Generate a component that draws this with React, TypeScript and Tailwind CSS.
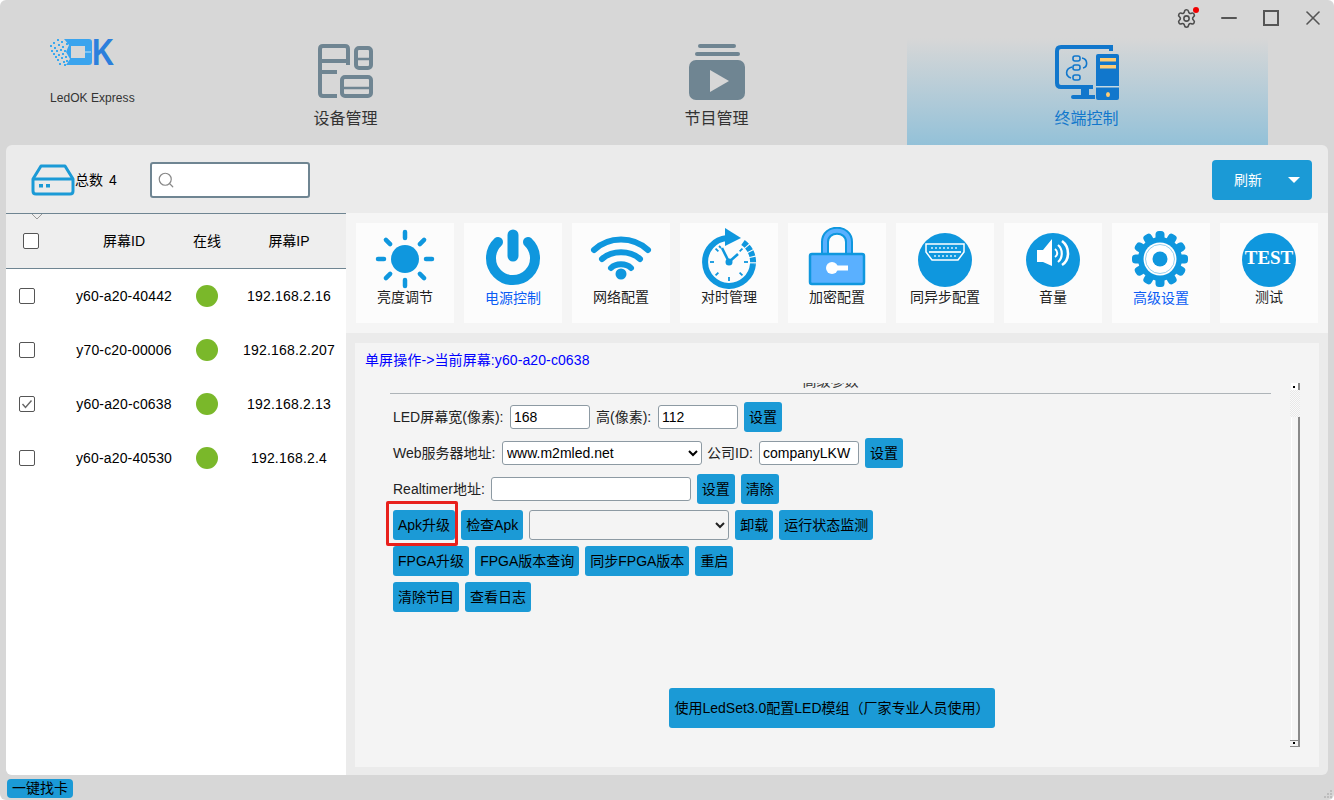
import { Minus, Search, Settings, X } from "lucide-react";
import type { ReactNode } from "react";

const BLUE = "#0f97de";
const SLATE = "#6f8592";

function SunIcon() {
  return (
    <svg width="64" height="64" viewBox="0 0 64 64" className="mt-[4px]">
      <circle cx="32" cy="32" r="14" fill={BLUE} />
      {[0, 45, 90, 135, 180, 225, 270, 315].map((a) => (
        <line key={a} x1="32" y1="11" x2="32" y2="5" stroke={BLUE} strokeWidth="4.5" strokeLinecap="round" transform={`rotate(${a} 32 32)`} />
      ))}
    </svg>
  );
}

function PowerIcon() {
  return (
    <svg width="64" height="64" viewBox="0 0 64 64" className="mt-[4px]">
      <path d="M17 15 A22 22 0 1 0 47 15" fill="none" stroke={BLUE} strokeWidth="10" strokeLinecap="round" />
      <line x1="32" y1="8" x2="32" y2="29" stroke={BLUE} strokeWidth="11" strokeLinecap="round" />
    </svg>
  );
}

function WifiIcon() {
  return (
    <svg width="64" height="64" viewBox="0 0 64 64" className="mt-[4px]">
      <g fill="none" stroke={BLUE} strokeWidth="6" strokeLinecap="round">
        <path d="M5 23 C20 9 44 9 59 23" />
        <path d="M13 32 C23 23 41 23 51 32" />
        <path d="M22 41 C27 36 37 36 42 41" />
      </g>
      <circle cx="32" cy="47" r="5.5" fill={BLUE} />
    </svg>
  );
}

function ClockIcon() {
  return (
    <svg width="64" height="64" viewBox="0 0 64 64" className="mt-[4px]">
      <path d="M30 11 A24 24 0 1 0 56 37" fill="none" stroke={BLUE} strokeWidth="6" />
      <path d="M28 1 L44 11 L28 19 Z" fill={BLUE} />
      <path d="M46 15.5 A24 24 0 0 1 56 37" fill="none" stroke={BLUE} strokeWidth="6" strokeDasharray="5 1" />
      {[45, 90, 135, 180, 225, 270, 315].map((a) => (
        <line key={a} x1="32" y1="16" x2="32" y2="20" stroke={BLUE} strokeWidth="1.8" transform={`rotate(${a} 32 35)`} />
      ))}
      <line x1="22" y1="19" x2="24" y2="21" stroke={BLUE} strokeWidth="1.8" />
      <path d="M25 21 L32 35 L41 27" fill="none" stroke={BLUE} strokeWidth="2.6" />
      <circle cx="32" cy="35" r="3.5" fill={BLUE} />
    </svg>
  );
}

function LockIcon() {
  return (
    <svg width="64" height="64" viewBox="0 0 64 64" className="mt-[4px]">
      <path d="M20 27 V15 C20 0 44 0 44 15 V27" fill="none" stroke={BLUE} strokeWidth="8" />
      <path d="M20 27 V15 C20 0 44 0 44 15 V27" fill="none" stroke="#5ab0ff" strokeWidth="4" />
      <rect x="5" y="27" width="54" height="30" rx="2" fill="#5ab0ff" stroke={BLUE} strokeWidth="2.5" />
      <circle cx="27" cy="41" r="6" fill="#fff" />
      <rect x="31" y="38.5" width="12" height="5" fill="#fff" />
    </svg>
  );
}

function HdmiIcon() {
  return (
    <svg width="64" height="64" viewBox="0 0 64 64" className="mt-[4px]">
      <circle cx="32" cy="33" r="27" fill={BLUE} />
      <path d="M13 17 H51 V25 L45 33 H19 L13 25 Z" fill="none" stroke="#fff" strokeWidth="1.5" />
      <line x1="16" y1="25" x2="48" y2="25" stroke="#d5eefb" strokeWidth="2" />
      <line x1="18" y1="21" x2="46" y2="21" stroke="#d5eefb" strokeWidth="1.5" strokeDasharray="2 2" />
      <line x1="21" y1="29" x2="43" y2="29" stroke="#d5eefb" strokeWidth="1.5" strokeDasharray="2 2" />
    </svg>
  );
}

function VolumeIcon() {
  return (
    <svg width="64" height="64" viewBox="0 0 64 64" className="mt-[4px]">
      <circle cx="32" cy="33" r="27" fill={BLUE} />
      <path d="M16 23 H22 L31 12 V39 L22 35 H16 Z" fill="#fff" />
      <g fill="none" stroke="#fff">
        <path d="M34 22 C37 24 37 28 34 30" strokeWidth="2" />
        <path d="M37 18 C42 22 42 31 37 35" strokeWidth="2.2" />
        <path d="M41 14 C49 20 49 33 41 38" strokeWidth="2.6" />
      </g>
    </svg>
  );
}

function GearIcon() {
  const teeth = [0, 30, 60, 90, 120, 150, 180, 210, 240, 270, 300, 330];
  return (
    <svg width="64" height="64" viewBox="0 0 64 64" className="mt-[4px]">
      <g transform="translate(-1 0)">
        {teeth.map((a) => (
          <rect key={a} x="27.5" y="4" width="9" height="12" rx="3.5" fill={BLUE} transform={`rotate(${a} 32 32)`} />
        ))}
        <circle cx="32" cy="32" r="22" fill={BLUE} />
        <circle cx="32" cy="32" r="16.5" fill="#fff" />
        <circle cx="32" cy="32" r="14.5" fill="none" stroke="#7cc4ea" strokeWidth="0.8" />
        <circle cx="32" cy="32" r="7.5" fill={BLUE} />
      </g>
    </svg>
  );
}

function TestIcon() {
  return (
    <svg width="64" height="64" viewBox="0 0 64 64" className="mt-[4px]">
      <circle cx="32" cy="33" r="27" fill={BLUE} />
      <text x="32" y="37" textAnchor="middle" fill="#fff" fontSize="19" fontWeight="700" fontFamily="Liberation Serif, serif">
        TEST
      </text>
    </svg>
  );
}

const TOOLS: { label: string; icon: ReactNode; active?: boolean }[] = [
  { label: "亮度调节", icon: <SunIcon /> },
  { label: "电源控制", icon: <PowerIcon />, active: true },
  { label: "网络配置", icon: <WifiIcon /> },
  { label: "对时管理", icon: <ClockIcon /> },
  { label: "加密配置", icon: <LockIcon /> },
  { label: "同异步配置", icon: <HdmiIcon /> },
  { label: "音量", icon: <VolumeIcon /> },
  { label: "高级设置", icon: <GearIcon />, active: true },
  { label: "测试", icon: <TestIcon /> },
];

const SCREENS = [
  { id: "y60-a20-40442", ip: "192.168.2.16" },
  { id: "y70-c20-00006", ip: "192.168.2.207" },
  { id: "y60-a20-c0638", ip: "192.168.2.13", checked: true },
  { id: "y60-a20-40530", ip: "192.168.2.4" },
];

function DeviceTabIcon() {
  return (
    <svg width="56" height="56" viewBox="0 0 56 56">
      <g fill="none" stroke={SLATE} strokeWidth="4">
        <path d="M19 52 H5 Q2 52 2 49 V5 Q2 2 5 2 H27 Q30 2 30 5 V21" />
        <path d="M2 17 H30" />
        <path d="M2 28 H19" />
        <rect x="38" y="4" width="15" height="20" rx="3" />
        <rect x="24" y="33" width="29" height="19" rx="3" />
      </g>
      <path d="M38 15 H53 M24 44 H53" stroke={SLATE} strokeWidth="2.5" />
    </svg>
  );
}

function ProgramTabIcon() {
  return (
    <svg width="56" height="56" viewBox="0 0 56 56">
      <rect x="9" y="0" width="38" height="4" rx="2" fill={SLATE} />
      <rect x="6" y="8" width="45" height="4" rx="2" fill={SLATE} />
      <rect x="0" y="16" width="56" height="40" rx="7" fill={SLATE} />
      <path d="M21 26 L40 37 L21 48 Z" fill="#d7d7d7" />
    </svg>
  );
}

function TerminalTabIcon() {
  const c = "#1177cc";
  return (
    <svg width="64" height="56" viewBox="0 0 64 56">
      <path d="M38 42 H6 Q2 42 2 38 V6 Q2 2 6 2 H56 V6" fill="none" stroke={c} strokeWidth="4" />
      <path d="M26 42 H34 V50 H40 V54 H18 Q16 54 16 52 Q16 50 18 50 H26 Z" fill={c} />
      <rect x="41" y="9" width="23" height="46" rx="2" fill={c} />
      <rect x="41" y="41" width="23" height="1.5" fill="#c3d8e2" />
      <rect x="45" y="13" width="16" height="3.5" fill="#ffcc73" />
      <rect x="45" y="20" width="16" height="3.5" fill="#ffcc73" />
      <ellipse cx="53" cy="49.5" rx="2" ry="2.5" fill="#ffcc73" />
      <g fill="none" stroke={c} strokeWidth="1.6">
        <rect x="18" y="11" width="7" height="5" rx="2" />
        <rect x="18" y="20" width="7" height="5" rx="2" />
        <rect x="18" y="30" width="7" height="5" rx="2" />
        <path d="M27 13 C33 14 33 22 28 23" />
        <path d="M17 22 C10 24 10 31 16 33" />
      </g>
    </svg>
  );
}

const LOGO_DOTS = [
  [1, 7], [4, 4], [8, 1], [12, 3], [2, 12], [5, 9], [9, 6], [13, 8], [4, 15], [7, 12], [11, 11], [15, 12],
  [6, 18], [9, 16], [13, 15], [8, 21], [12, 19], [16, 18], [10, 25], [14, 23], [17, 5], [17, 22], [15, 26],
];

function Logo() {
  return (
    <svg width="76" height="43" viewBox="0 -8 76 43" className="-mt-[8px]">
      {LOGO_DOTS.map(([x, y]) => (
        <rect key={`${x}-${y}`} x={x} y={y} width="2" height="2" fill="#3aa9ef" />
      ))}
      <path fillRule="evenodd" d="M15 1 H40 Q43 1 43 4 V24 Q43 27 40 27 H17 L21 21 L17 14 L20 7 Z M22 8 V20 H36 V8 Z" fill="#3aa4ee" />
      <line x1="36" y1="14" x2="42" y2="14" stroke="#bfe3fa" strokeWidth="1" />
      <text x="43" y="27" fill="#2c7fdc" fontSize="36" fontWeight="700" fontFamily="Liberation Sans, sans-serif" textLength="22" lengthAdjust="spacingAndGlyphs">
        K
      </text>
    </svg>
  );
}

function Btn({ children, className = "" }: { children: ReactNode; className?: string }) {
  return (
    <button className={`relative h-[30px] rounded-[3px] bg-[#1b9ad6] px-[5px] text-[14px] text-black whitespace-nowrap ${className}`}>
      {children}
    </button>
  );
}

function TextInput({ value, className = "" }: { value?: string; className?: string }) {
  return (
    <input
      readOnly
      value={value ?? ""}
      className={`h-[24px] rounded-[3px] border border-[#8d9aa3] bg-white px-[3px] text-[14px] text-black outline-none ${className}`}
    />
  );
}

function Check({ checked, className = "" }: { checked?: boolean; className?: string }) {
  return (
    <div className={`flex h-[16px] w-[16px] items-center justify-center rounded-[2px] border-[1.5px] border-[#555] bg-white ${className}`}>
      {checked && (
        <svg width="12" height="12" viewBox="0 0 12 12">
          <path d="M1.5 6 L4.5 9.5 L10.5 2.5" fill="none" stroke="#666" strokeWidth="1.4" />
        </svg>
      )}
    </div>
  );
}

function Row({ children }: { children: ReactNode }) {
  return <div className="flex h-[30px] items-center gap-[6px]">{children}</div>;
}

export default function App() {
  return (
    <div className="flex h-[800px] w-[1334px] flex-col overflow-hidden rounded-md bg-[#d7d7d7] font-['Liberation_Sans','Noto_Sans_CJK_SC',sans-serif] text-[14px] text-black">
      {/* title bar */}
      <div className="flex h-[38px] items-start justify-end">
        <div className="relative mt-[8px] mr-[20px]">
          <Settings size={21} strokeWidth={1.8} color="#4d4d4d" />
          <span className="absolute right-[-2px] top-[-1px] h-[6px] w-[6px] rounded-full bg-[#f00000]" />
        </div>
        <Minus size={24} strokeWidth={2} color="#555" className="mt-[6px] mr-[22px]" />
        <div className="mt-[10px] mr-[22px] h-[16px] w-[16px] border-2 border-[#555]" />
        <X size={24} strokeWidth={1.6} color="#555" className="mt-[6px] mr-[9px]" />
      </div>

      {/* nav */}
      <div className="flex h-[107px]">
        <div className="w-[165px] pl-[49px]">
          <Logo />
          <div className="mt-[17px] pl-[1px] text-[12px] leading-[16px] tracking-[0.05px] text-[#333]">LedOK Express</div>
        </div>
        <div className="flex gap-[10px]">
          <div className="flex w-[361px] flex-col items-center pt-[6px]">
            <DeviceTabIcon />
            <div className="mt-[7px] text-[16px] leading-[24px] text-[#333]">设备管理</div>
          </div>
          <div className="flex w-[361px] flex-col items-center pt-[6px]">
            <ProgramTabIcon />
            <div className="mt-[7px] text-[16px] leading-[24px] text-[#333]">节目管理</div>
          </div>
          <div className="flex w-[361px] flex-col items-center bg-linear-to-b from-[#d7d7d7] to-[#93c1d8] pr-[2px] pt-[7px]">
            <TerminalTabIcon />
            <div className="mt-[6px] text-[16px] leading-[24px] text-[#1177cc]">终端控制</div>
          </div>
        </div>
      </div>

      {/* main panel */}
      <div className="mx-[6px] flex h-[630px] flex-col overflow-hidden rounded-md bg-[#ebebeb]">
        <div className="flex h-[68px] items-center pl-[25px] pr-[16px] pt-[2px]">
          <svg width="44" height="32" viewBox="0 0 44 32">
            <path d="M10 2 H34 L42 15 V27 Q42 30 39 30 H5 Q2 30 2 27 V15 Z" fill="none" stroke="#1b9ad6" strokeWidth="3" strokeLinejoin="round" />
            <path d="M2 15 H42" stroke="#1b9ad6" strokeWidth="3" />
            <rect x="8" y="20" width="4" height="3.5" fill="#1b9ad6" />
            <rect x="15" y="20" width="4" height="3.5" fill="#1b9ad6" />
          </svg>
          <span>总数</span>
          <span className="ml-[6px]">4</span>
          <div className="ml-[33px] flex h-[36px] w-[160px] items-center rounded-[3px] border-2 border-[#6f8592] bg-white pl-[5px]">
            <Search size={18} strokeWidth={1.6} color="#888" />
          </div>
          <div className="ml-auto flex h-[40px] w-[100px] items-center rounded-[4px] bg-[#1b9ad6] text-white">
            <span className="ml-[22px]">刷新</span>
            <span className="ml-auto mr-[12px] h-0 w-0 border-x-[6px] border-t-[6px] border-x-transparent border-t-white" />
          </div>
        </div>

        <div className="flex h-[562px]">
          {/* screen list */}
          <div className="relative w-[340px] border-t border-[#6f8592] bg-white">
            <svg width="12" height="6" viewBox="0 0 12 6" className="absolute left-[25px] top-[0px]">
              <path d="M1 0 L6 5 L11 0" fill="none" stroke="#999" />
            </svg>
            <div className="grid h-[55px] grid-cols-[64px_108px_58px_106px] items-center border-b border-[#6f8592] bg-[#eeeeee] text-center">
              <Check className="ml-[17px]" />
              <div>屏幕ID</div>
              <div>在线</div>
              <div>屏幕IP</div>
            </div>
            {SCREENS.map((s) => (
              <div key={s.id} className="grid h-[54px] grid-cols-[64px_108px_58px_106px] items-center text-center">
                <Check checked={s.checked} className="ml-[13px]" />
                <div className="tracking-[0.15px]">{s.id}</div>
                <div className="mx-auto h-[22px] w-[22px] rounded-full bg-[#7ab82a]" />
                <div className="whitespace-nowrap tracking-[0.2px]">{s.ip}</div>
              </div>
            ))}
          </div>

          <div className="flex flex-1 flex-col">
            {/* tools */}
            <div className="flex h-[120px] gap-[10px] bg-[#f5f5f5] pl-[10px] pt-[10px]">
              {TOOLS.map((t) => (
                <div key={t.label} className="flex h-[100px] w-[98px] flex-col items-center bg-[#fcfcfc]">
                  {t.icon}
                  <div className={t.active ? "-mt-[3px] leading-[20px] text-[#0a5cf5]" : "-mt-[4px] leading-[20px] text-[#222]"}>{t.label}</div>
                </div>
              ))}
            </div>

            {/* single screen panel */}
            <div className="ml-[9px] mt-[10px] h-[424px] w-[964px] bg-[#f4f4f4]">
              <div className="h-[40px] pl-[10px] pt-[7px] leading-[20px] tracking-[0.1px] text-[#0000ff]">单屏操作-&gt;当前屏幕:y60-a20-c0638</div>
              <div className="flex">
                <div className="ml-[35px] w-[881px]">
                  <div className="flex h-[5px] items-end justify-center overflow-hidden text-[#333]">
                    <span className="shrink-0 leading-[14px]">高级参数</span>
                  </div>
                  <div className="mt-[5px] h-px bg-[#aeb4b8]" />
                  <div className="mt-[8px] flex flex-col gap-[6px] pl-[3px] text-[#222]">
                    <Row>
                      <span className="w-[111px] whitespace-nowrap">LED屏幕宽(像素):</span>
                      <TextInput value="168" className="w-[80px]" />
                      <span className="w-[56px] whitespace-nowrap">高(像素):</span>
                      <TextInput value="112" className="w-[80px]" />
                      <Btn>设置</Btn>
                    </Row>
                    <Row>
                      <span className="w-[103px] whitespace-nowrap">Web服务器地址:</span>
                      <select className="h-[24px] w-[200px] rounded-[3px] border border-[#8d9aa3] bg-white text-[14px] text-black">
                        <option>www.m2mled.net</option>
                      </select>
                      <span className="-ml-[1px] w-[46px] whitespace-nowrap">公司ID:</span>
                      <TextInput value="companyLKW" className="w-[100px]" />
                      <Btn>设置</Btn>
                    </Row>
                    <Row>
                      <span>Realtimer地址:</span>
                      <TextInput className="w-[200px]" />
                      <Btn>设置</Btn>
                      <Btn>清除</Btn>
                    </Row>
                    <Row>
                      <Btn>
                        Apk升级
                        <span className="absolute -bottom-[6px] -left-[7px] -right-[3px] -top-[9px] rounded-[2px] border-[3px] border-[#e8201c]" />
                      </Btn>
                      <Btn>检查Apk</Btn>
                      <select className="h-[30px] w-[200px] rounded-[3px] border border-[#8d9aa3] bg-[#f4f4f4]" />
                      <Btn>卸载</Btn>
                      <Btn>运行状态监测</Btn>
                    </Row>
                    <Row>
                      <Btn>FPGA升级</Btn>
                      <Btn>FPGA版本查询</Btn>
                      <Btn>同步FPGA版本</Btn>
                      <Btn>重启</Btn>
                    </Row>
                    <Row>
                      <Btn>清除节目</Btn>
                      <Btn>查看日志</Btn>
                    </Row>
                  </div>
                  <button className="ml-[279px] mt-[76px] block h-[40px] w-[326px] rounded-[3px] bg-[#1b9ad6] text-[14px] text-black">
                    使用LedSet3.0配置LED模组（厂家专业人员使用）
                  </button>
                </div>

                {/* scrollbar */}
                <div className="ml-[19px] flex h-[364px] w-[10px] flex-col">
                  <div className="relative ml-[1px] h-[7px] border-r-2 border-[#8a8a8a] bg-white">
                    <span className="absolute left-[2px] top-[3px] h-[2px] w-[2px] bg-black" />
                  </div>
                  <div className="h-[27px] bg-[repeating-conic-gradient(#e8e8e8_0_25%,#fafafa_0_50%)] bg-size-[2px_2px]" />
                  <div className="ml-[1px] flex-1 border-l border-r-2 border-l-white border-r-[#8a8a8a] bg-[#f6f6f6]" />
                  <div className="relative h-[7px] border-y border-r-2 border-[#8a8a8a] bg-[#f4f4f4]">
                    <span className="absolute left-[3px] top-[1px] h-[2px] w-[2px] bg-black" />
                  </div>
                </div>
              </div>
            </div>
          </div>
        </div>
      </div>

      {/* footer */}
      <div className="relative flex-1 pl-[7px] pt-[4px]">
        <button className="block h-[19px] w-[66px] rounded-[4px] bg-[#1b9ad6] text-[14px] leading-[19px] text-black">一键找卡</button>
        <svg width="10" height="10" viewBox="0 0 10 10" className="absolute bottom-[1px] right-[1px]">
          <g fill="#bdbdbd">
            <rect x="7" y="1" width="2" height="2" />
            <rect x="4" y="4" width="2" height="2" />
            <rect x="7" y="4" width="2" height="2" />
            <rect x="1" y="7" width="2" height="2" />
            <rect x="4" y="7" width="2" height="2" />
            <rect x="7" y="7" width="2" height="2" />
          </g>
        </svg>
      </div>
    </div>
  );
}
